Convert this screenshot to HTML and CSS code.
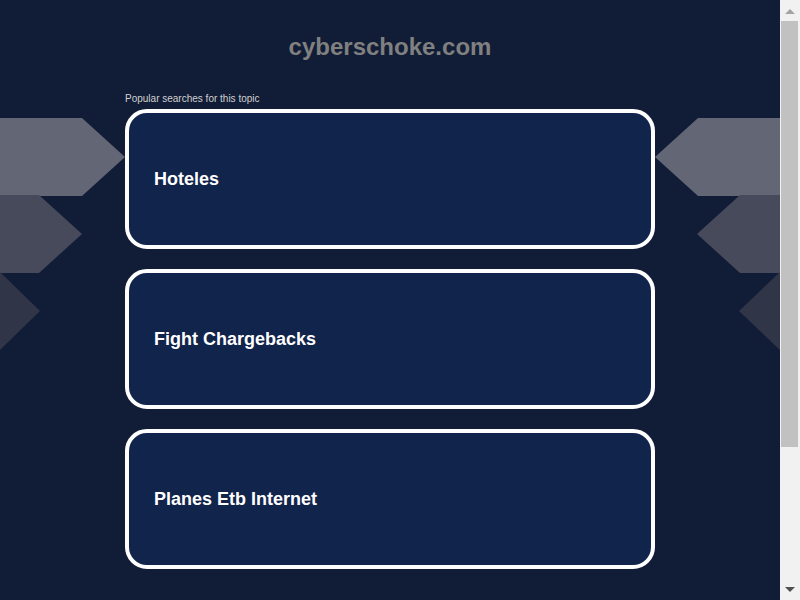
FILE: index.html
```html
<!DOCTYPE html>
<html lang="en">
<head>
<meta charset="utf-8">
<title>cyberschoke.com</title>
<link rel="stylesheet" href="styles.css">
</head>
<body>
<div class="frame">
  <div class="deco deco-left">
    <div class="arrow arrow-l1"></div>
    <div class="arrow arrow-l2"></div>
    <div class="arrow arrow-l3"></div>
  </div>
  <div class="deco deco-right">
    <div class="arrow arrow-r1"></div>
    <div class="arrow arrow-r2"></div>
    <div class="arrow arrow-r3"></div>
  </div>
  <main class="page">
    <h1 class="domain">cyberschoke.com</h1>
    <section class="searches">
      <p class="label">Popular searches for this topic</p>
      <a class="card" href="#">Hoteles</a>
      <a class="card" href="#">Fight Chargebacks</a>
      <a class="card" href="#">Planes Etb Internet</a>
    </section>
  </main>
</div>
<div class="scrollbar" aria-hidden="true">
  <div class="sb-btn sb-up"><span class="tri tri-up"></span></div>
  <div class="sb-track"><div class="sb-thumb"></div></div>
  <div class="sb-btn sb-down"><span class="tri tri-down"></span></div>
</div>
</body>
</html>
```

FILE: styles.css
```css
html, body {
  margin: 0;
  padding: 0;
}
html {
  background: #111c36;
}
body {
  background: #111c36;
  font-family: "Liberation Sans", Arial, sans-serif;
  padding-right: 20px;
}
.frame {
  position: relative;
}
.page {
  position: relative;
  padding: 32px 0 245px;
}
.domain {
  margin: 0;
  text-align: center;
  font-size: 24px;
  line-height: 30px;
  font-weight: bold;
  color: #808080;
}
.searches {
  width: 530px;
  margin: 31px auto 0;
  display: flex;
  flex-direction: column;
  gap: 20px;
}
.label {
  margin: 0 0 -16px;
  font-size: 10px;
  line-height: 12px;
  color: #d0d0d0;
}
.card {
  box-sizing: border-box;
  height: 140px;
  border: 4px solid #ffffff;
  border-radius: 22px;
  background: #11244b;
  display: flex;
  align-items: center;
  padding: 1px 0 0 25px;
  color: #ffffff;
  font-size: 18px;
  font-weight: bold;
  text-decoration: none;
}
.deco {
  position: absolute;
  top: 0;
  width: 125px;
  height: 360px;
}
.deco-left { left: 0; }
.deco-right { right: 0; }
.arrow {
  position: absolute;
  height: 78px;
}
.arrow-l1 { left: 0; top: 118px; width: 125px; background: #636674; clip-path: polygon(0 0, 82px 0, 100% 50%, 82px 100%, 0 100%); }
.arrow-l2 { left: 0; top: 195px; width: 82px; background: #474a5b; clip-path: polygon(0 0, 39px 0, 100% 50%, 39px 100%, 0 100%); }
.arrow-l3 { left: 0; top: 272px; width: 40px; background: #313548; clip-path: polygon(0 0, 100% 50%, 0 100%); }
.arrow-r1 { right: 0; top: 118px; width: 125px; background: #636674; clip-path: polygon(100% 0, 43px 0, 0 50%, 43px 100%, 100% 100%); }
.arrow-r2 { right: 0; top: 195px; width: 83px; background: #474a5b; clip-path: polygon(100% 0, 43px 0, 0 50%, 43px 100%, 100% 100%); }
.arrow-r3 { right: 0; top: 272px; width: 41px; background: #313548; clip-path: polygon(100% 0, 0 50%, 100% 100%); }

/* classic scrollbar look */
.scrollbar {
  position: fixed;
  top: 0;
  right: 0;
  width: 20px;
  height: 100vh;
  background: #f1f1f1;
  display: flex;
  flex-direction: column;
}
.sb-btn {
  height: 17px;
  display: flex;
  align-items: center;
  justify-content: center;
}
.sb-track {
  flex: 1;
  padding: 4px 2px 0 1px;
}
.sb-thumb {
  height: 426px;
  background: #c1c1c1;
}
.tri {
  width: 0;
  height: 0;
  border-left: 5px solid transparent;
  border-right: 5px solid transparent;
}
.tri-up {
  border-bottom: 5px solid #a3a3a3;
  margin-top: 6px;
}
.tri-down {
  border-top: 5px solid #505050;
  margin-top: -4px;
}
```
